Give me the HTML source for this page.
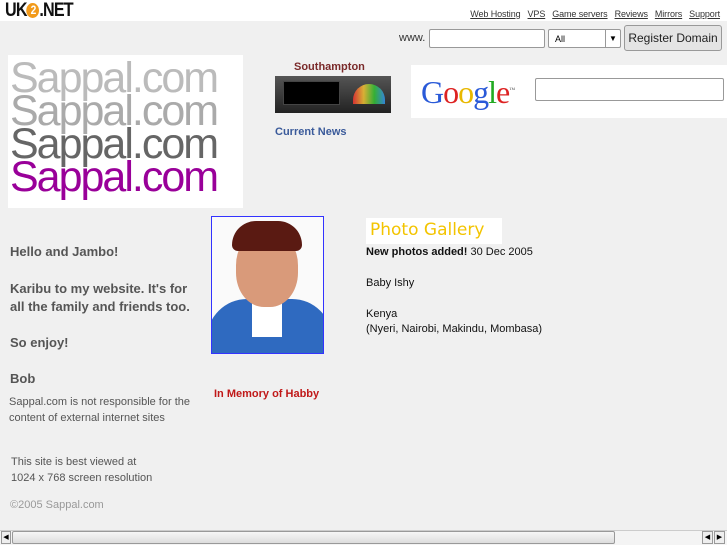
<!DOCTYPE html>
<html><head><meta charset="utf-8"><style>
*{margin:0;padding:0;box-sizing:border-box}
body{width:727px;height:545px;background:#f0f0f0;font-family:"Liberation Sans",sans-serif;position:relative;overflow:hidden}
.a{position:absolute}
.top{left:0;top:0;width:727px;height:21px;background:#fff}
.nav{white-space:nowrap}
.nav a{color:#333;font-size:9px;text-decoration:underline;margin-left:7px;letter-spacing:-0.1px}
.logo span{display:block;font-size:43px;line-height:33px;letter-spacing:-2px}
.t{color:#555;font-weight:bold;font-size:13px}
.s{color:#555;font-size:11px;line-height:16px}
.g{color:#111;font-size:11px;line-height:15px}
</style></head><body>
<div class="a top"></div>
<div class="a" style="left:5px;top:0;font-size:19px;font-weight:bold;color:#111;letter-spacing:-1px;transform:scaleX(.85);transform-origin:left">UK<span style="display:inline-block;width:15px;height:15px;border-radius:50%;background:#f29a1a;color:#fff;font-size:12px;text-align:center;line-height:15px;vertical-align:2px">2</span>.NET</div>
<div class="a nav" style="right:7px;top:4px">
<a>Web Hosting</a><a>VPS</a><a>Game servers</a><a>Reviews</a><a>Mirrors</a><a>Support</a></div>
<div class="a" style="left:399px;top:32px;font-size:11px;color:#333">www.</div>
<div class="a" style="left:429px;top:29px;width:116px;height:19px;background:#fff;border:1px solid #999;border-radius:2px"></div>
<div class="a" style="left:548px;top:29px;width:73px;height:19px;background:#fff;border:1px solid #999;border-radius:2px;font-size:9px;padding:4px 6px">All<span style="position:absolute;right:0;top:0;width:15px;height:17px;border-left:1px solid #999;font-size:8px;text-align:center;line-height:17px">▼</span></div>
<div class="a" style="left:624px;top:25px;width:98px;height:26px;background:#e4e4e4;border:1px solid #999;border-radius:3px;font-size:12px;text-align:center;line-height:24px;color:#222">Register Domain</div>
<div class="a logo" style="left:8px;top:55px;width:235px;height:153px;background:#fff;padding:7px 0 0 2px">
<span style="color:#bbb">Sappal.com</span><span style="color:#aaa">Sappal.com</span><span style="color:#666">Sappal.com</span><span style="color:#990099">Sappal.com</span></div>
<div class="a" style="left:294px;top:61px;font-size:11px;font-weight:bold;color:#7a2a2a">Southampton</div>
<div class="a" style="left:275px;top:76px;width:116px;height:37px;background:linear-gradient(#555,#222)"><div class="a" style="left:8px;top:5px;width:57px;height:24px;background:#000;border:1px solid #444"></div><div class="a" style="left:78px;top:8px;width:32px;height:20px;background:linear-gradient(90deg,#f33,#fc3,#3c3,#39f);border-radius:16px 16px 0 0;opacity:.8"></div></div>
<div class="a" style="left:275px;top:126px;font-size:11px;font-weight:bold;color:#3a5a9a">Current News</div>
<div class="a" style="left:411px;top:65px;width:316px;height:53px;background:#fff"></div>
<div class="a" style="left:421px;top:74px;font-family:'Liberation Serif',serif;font-size:32px;letter-spacing:-1px"><span style="color:#2a5ad8">G</span><span style="color:#d22">o</span><span style="color:#e8b800">o</span><span style="color:#2a5ad8">g</span><span style="color:#2a2">l</span><span style="color:#d22">e</span><sup style="font-size:6px;color:#555">™</sup></div>
<div class="a" style="left:535px;top:78px;width:189px;height:23px;background:#fff;border:1px solid #999;border-radius:2px"></div>
<div class="a t" style="left:10px;top:244px">Hello and Jambo!</div>
<div class="a t" style="left:10px;top:280px;line-height:18px">Karibu to my website. It's for<br>all the family and friends too.</div>
<div class="a t" style="left:10px;top:335px">So enjoy!</div>
<div class="a t" style="left:10px;top:371px">Bob</div>
<div class="a s" style="left:9px;top:394px">Sappal.com is not responsible for the<br>content of external internet sites</div>
<div class="a s" style="left:11px;top:454px">This site is best viewed at<br>1024 x 768 screen resolution</div>
<div class="a s" style="left:10px;top:497px;color:#999">©2005 Sappal.com</div>
<div class="a" style="left:211px;top:216px;width:113px;height:138px;border:1px solid #33f;background:#fafafa;overflow:hidden">
<div class="a" style="left:-5px;top:82px;width:125px;height:60px;background:#2f6ac0;border-radius:40px 40px 0 0"></div>
<div class="a" style="left:40px;top:80px;width:30px;height:40px;background:#fff"></div>
<div class="a" style="left:24px;top:14px;width:62px;height:76px;background:#d99a7a;border-radius:45%"></div>
<div class="a" style="left:20px;top:4px;width:70px;height:30px;background:#5a1a12;border-radius:40px 40px 10px 10px"></div></div>
<div class="a" style="left:214px;top:388px;font-size:11px;font-weight:bold;color:#c01818">In Memory of Habby</div>
<div class="a" style="left:366px;top:218px;width:136px;height:26px;background:#fff;font-family:'DejaVu Sans',sans-serif;font-size:17px;color:#f3c400;padding:2px 4px">Photo Gallery</div>
<div class="a g" style="left:366px;top:245px"><b>New photos added!</b> 30 Dec 2005</div>
<div class="a g" style="left:366px;top:276px">Baby Ishy</div>
<div class="a g" style="left:366px;top:307px">Kenya<br>(Nyeri, Nairobi, Makindu, Mombasa)</div>
<div class="a" style="left:0;top:530px;width:727px;height:15px;background:#f4f4f4;border-top:1px solid #ccc"></div>
<div class="a" style="left:1px;top:531px;width:10px;height:13px;border:1px solid #999;background:#eee;font-size:7px;line-height:11px;text-align:center">◀</div>
<div class="a" style="left:12px;top:531px;width:603px;height:13px;border:1px solid #999;border-radius:2px;background:linear-gradient(#f6f6f6,#ddd)"></div>
<div class="a" style="left:702px;top:531px;width:11px;height:13px;border:1px solid #999;background:#eee;font-size:7px;line-height:11px;text-align:center">◀</div>
<div class="a" style="left:714px;top:531px;width:11px;height:13px;border:1px solid #999;background:#eee;font-size:7px;line-height:11px;text-align:center">▶</div>
</body></html>
